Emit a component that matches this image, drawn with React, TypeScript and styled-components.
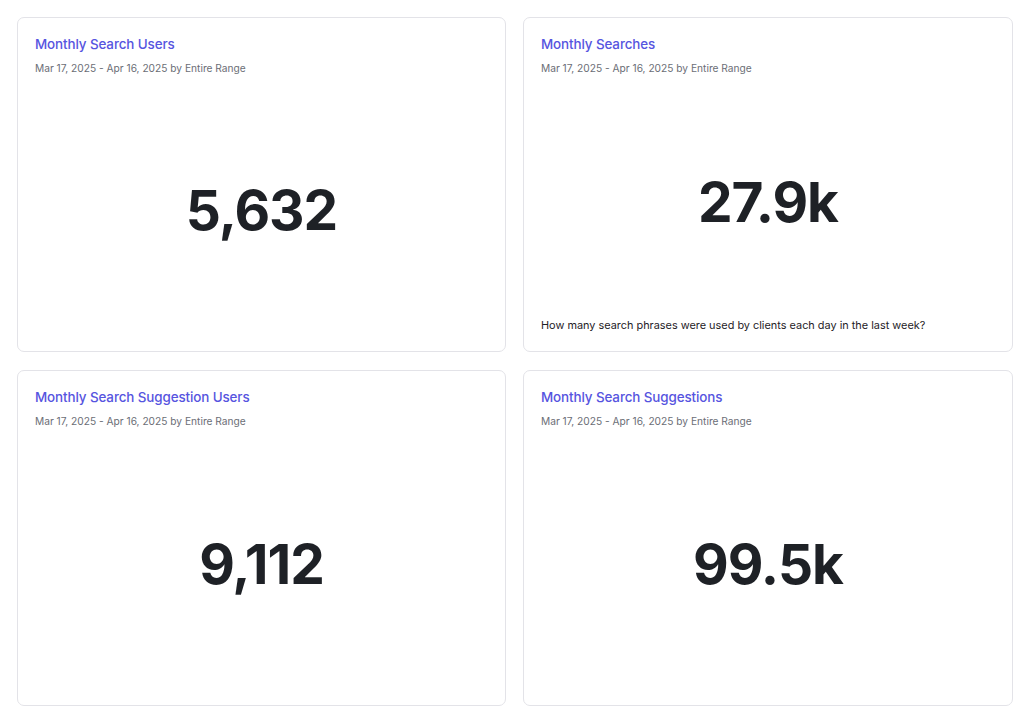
import styled, { createGlobalStyle } from "styled-components";

const GlobalStyle = createGlobalStyle`
  html, body {
    margin: 0;
    padding: 0;
    background: #ffffff;
    font-family: Inter, "Noto Sans", Arial, sans-serif;
  }
`;

const Grid = styled.div`
  display: grid;
  grid-template-columns: 489px 490px;
  grid-template-rows: 335px 336px;
  gap: 18px 17px;
  padding: 17px 0 0 17px;
`;

const Card = styled.div<{ $hasCaption?: boolean }>`
  box-sizing: border-box;
  display: flex;
  flex-direction: column;
  border: 1px solid #e3e3e8;
  border-radius: 7px;
  background: #fff;
  padding: 17px 17px ${(p) => (p.$hasCaption ? "19px" : "17px")} 17px;
`;

const Title = styled.div`
  font-size: 13.4px;
  line-height: 18px;
  font-weight: 500;
  color: #5654e0;
  letter-spacing: -0.1px;
`;

const Range = styled.div`
  margin-top: 8px;
  font-size: 10.2px;
  line-height: 14px;
  color: #6b6e76;
`;

const Body = styled.div`
  flex: 1;
  display: flex;
  align-items: center;
  justify-content: center;
  padding-top: 12px;
`;

const Value = styled.div`
  font-size: 55px;
  line-height: 1;
  font-weight: 700;
  color: #1e2126;
  letter-spacing: -1px;
`;

const Caption = styled.div`
  font-size: 10.9px;
  line-height: 14px;
  color: #1e2126;
`;

interface Metric {
  title: string;
  value: string;
  caption?: string;
}

const metrics: Metric[] = [
  { title: "Monthly Search Users", value: "5,632" },
  {
    title: "Monthly Searches",
    value: "27.9k",
    caption: "How many search phrases were used by clients each day in the last week?",
  },
  { title: "Monthly Search Suggestion Users", value: "9,112" },
  { title: "Monthly Search Suggestions", value: "99.5k" },
];

const App = () => {
  return (
    <>
      <GlobalStyle />
      <Grid>
        {metrics.map((m) => (
          <Card key={m.title} $hasCaption={!!m.caption}>
            <Title>{m.title}</Title>
            <Range>Mar 17, 2025 - Apr 16, 2025 by Entire Range</Range>
            <Body>
              <Value>{m.value}</Value>
            </Body>
            {m.caption && <Caption>{m.caption}</Caption>}
          </Card>
        ))}
      </Grid>
    </>
  );
};

export default App;
